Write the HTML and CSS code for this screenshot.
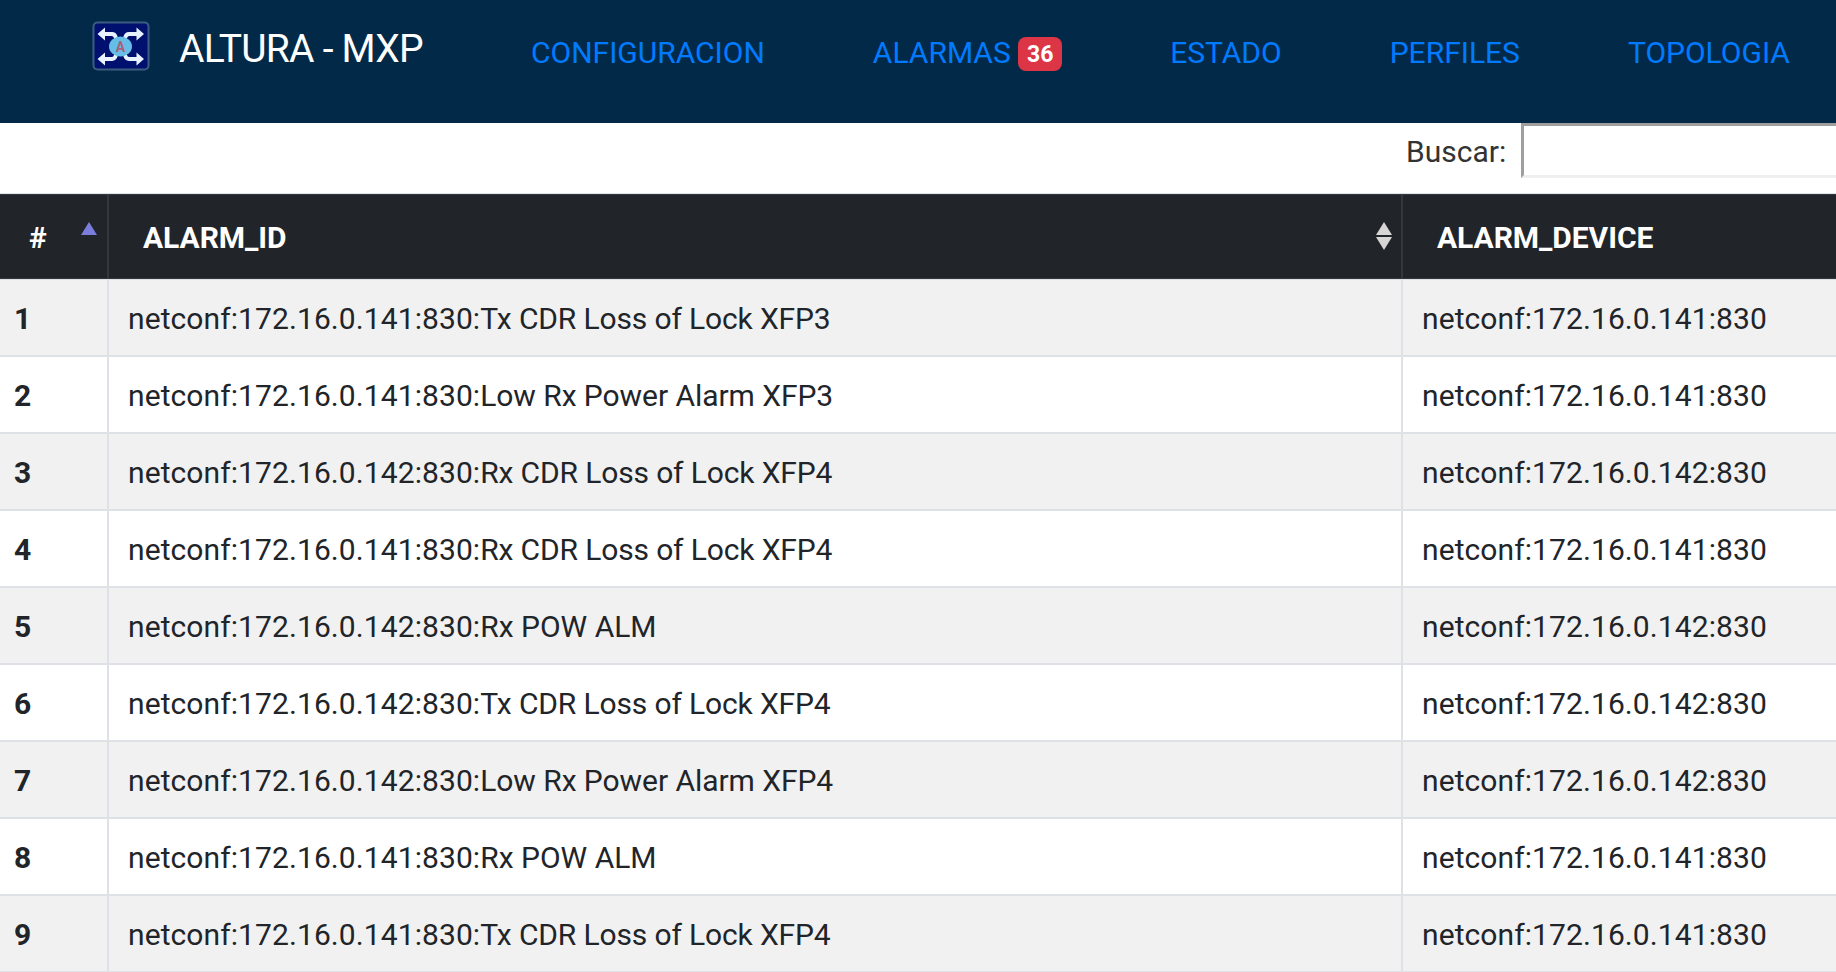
FILE: index.html
```html
<!DOCTYPE html>
<html lang="es">
<head>
<meta charset="utf-8">
<title>ALTURA - MXP</title>
<link rel="stylesheet" href="styles.css">
</head>
<body>
<header class="navbar">
  <svg class="logo" viewBox="0 0 58 52" aria-hidden="true">
    <rect x="1.5" y="1.5" width="55" height="47" rx="4" fill="#00106f" stroke="#3c5c80" stroke-width="2"/>
    <g fill="none" stroke="#e9f3ff" stroke-width="3.8">
      <path d="M11 13h9q3 0 4 4l4 7"/><path d="M47 13H37q-3 0-4 4l-4 7"/>
      <path d="M11 38h9q3 0 4-4l4-7"/><path d="M47 38H37q-3 0-4-4l-4-7"/>
    </g>
    <g fill="#e9f3ff"><path d="M5.500 13l7.500-6.500v13zM52 13l-7.500-6.500v13zM5.500 38l7.500-6.500v13zM52 38l-7.500-6.500v13z"/></g>
    <ellipse cx="28.500" cy="25.500" rx="11.500" ry="10" fill="#65bde8"/>
    <text class="logo-letter" x="28.500" y="30.500" text-anchor="middle">A</text>
  </svg>
  <span class="brand">ALTURA - MXP</span>
  <nav class="menu">
    <a class="link">CONFIGURACION</a>
    <a class="link">ALARMAS <span class="badge">36</span></a>
    <a class="link">ESTADO</a>
    <a class="link">PERFILES</a>
    <a class="link">TOPOLOGIA</a>
  </nav>
</header>
<div class="filter"><label class="filter-label" for="q">Buscar:</label><input class="search" id="q" type="search"></div>
<table class="alarms">
  <colgroup><col class="c-num"><col class="c-id"><col class="c-device"></colgroup>
  <thead><tr>
    <th><div class="head">#<svg class="sort" viewBox="0 0 16 28"><path d="M0 13L8 0l8 13z" fill="#7a7ddc"/></svg></div></th>
    <th><div class="head">ALARM_ID<svg class="sort" viewBox="0 0 16 28"><path d="M0 13L8 0l8 13zM0 15h16L8 28z" fill="#d6d6d6"/></svg></div></th>
    <th><div class="head">ALARM_DEVICE</div></th>
  </tr></thead>
  <tbody>
    <tr><th>1</th><td><span class="node">netconf:172.16.0.141:830:</span><span class="cause">Tx CDR Loss of Lock XFP3</span></td><td class="node">netconf:172.16.0.141:830</td></tr>
    <tr><th>2</th><td><span class="node">netconf:172.16.0.141:830:</span><span class="cause-power">Low Rx Power Alarm XFP3</span></td><td class="node">netconf:172.16.0.141:830</td></tr>
    <tr><th>3</th><td><span class="node">netconf:172.16.0.142:830:</span><span class="cause">Rx CDR Loss of Lock XFP4</span></td><td class="node">netconf:172.16.0.142:830</td></tr>
    <tr><th>4</th><td><span class="node">netconf:172.16.0.141:830:</span><span class="cause">Rx CDR Loss of Lock XFP4</span></td><td class="node">netconf:172.16.0.141:830</td></tr>
    <tr><th>5</th><td><span class="node">netconf:172.16.0.142:830:</span>Rx POW ALM</td><td class="node">netconf:172.16.0.142:830</td></tr>
    <tr><th>6</th><td><span class="node">netconf:172.16.0.142:830:</span><span class="cause">Tx CDR Loss of Lock XFP4</span></td><td class="node">netconf:172.16.0.142:830</td></tr>
    <tr><th>7</th><td><span class="node">netconf:172.16.0.142:830:</span><span class="cause-power">Low Rx Power Alarm XFP4</span></td><td class="node">netconf:172.16.0.142:830</td></tr>
    <tr><th>8</th><td><span class="node">netconf:172.16.0.141:830:</span>Rx POW ALM</td><td class="node">netconf:172.16.0.141:830</td></tr>
    <tr><th>9</th><td><span class="node">netconf:172.16.0.141:830:</span><span class="cause">Tx CDR Loss of Lock XFP4</span></td><td class="node">netconf:172.16.0.141:830</td></tr>
  </tbody>
</table>
</body>
</html>
```
FILE: styles.css
```css
* { box-sizing: border-box; }
body {
  margin: 0;
  height: 972px;
  overflow: hidden;
  background: #fff;
  color: #212529;
  font: 30px/45px Roboto, sans-serif;
}
.navbar {
  display: flex;
  align-items: flex-start;
  height: 123px;
  padding: 21px 0 0 92px;
  background: #022a48;
  white-space: nowrap;
}
.logo { flex: none; width: 58px; height: 52px; }
.logo-letter { font: bold 14px Roboto, sans-serif; fill: #a95f78; }
.brand {
  flex: none;
  width: 352px;
  margin-left: 29px;
  color: #fff;
  font-size: 39px;
  letter-spacing: -0.75px;
  line-height: 56px;
}
.menu { display: flex; gap: 108px; padding-top: 9px; }
.link { color: #007bff; }
.badge {
  display: inline-block;
  width: 44px;
  height: 34px;
  border-radius: 8px;
  background: #dc3545;
  color: #fff;
  font-weight: 700;
  font-size: 23px;
  line-height: 35px;
  text-align: center;
  vertical-align: 1px;
}
.filter {
  display: flex;
  height: 70px;
  padding-left: 1406px;
  color: #333;
}
.filter-label { flex: none; width: 115px; padding-top: 6px; }
.search {
  flex: none;
  width: 400px;
  height: 55px;
  border: 3px solid;
  border-color: #9f9f9f #efefef #efefef #9f9f9f;
  background: #fff;
}
.alarms {
  width: 1900px;
  table-layout: fixed;
  border-collapse: separate;
  border-spacing: 0;
  border-top: 1px solid #dee2e6;
}
.c-num { width: 109px; }
.c-id { width: 1294px; }
.alarms th, .alarms td {
  height: 77px;
  padding: 2px 0 0 19px;
  border-right: 2px solid #dee2e6;
  border-bottom: 2px solid #dee2e6;
  text-align: left;
  vertical-align: middle;
  white-space: nowrap;
}
.node { letter-spacing: 0.09px; }
.cause { letter-spacing: -0.14px; }
.cause-power { letter-spacing: -0.06px; }
.alarms tbody th { padding-left: 14px; }
.alarms tbody tr:nth-child(odd) { background: #f1f1f1; }
.alarms thead th {
  height: 85px;
  padding: 2px 9px 0 34px;
  border-top: 1px solid #32383e;
  border-right-color: #32383e;
  border-bottom: 1px solid #32383e;
  background: #212529;
  color: #fff;
  letter-spacing: -0.05px;
}
.alarms thead th:first-child { padding: 2px 10px 0 29px; }
.alarms tbody tr:first-child > * { height: 78px; border-top: 1px solid #dee2e6; }
.head { display: flex; align-items: center; justify-content: space-between; }
.sort { width: 16px; height: 28px; margin-top: -3px; }
```
